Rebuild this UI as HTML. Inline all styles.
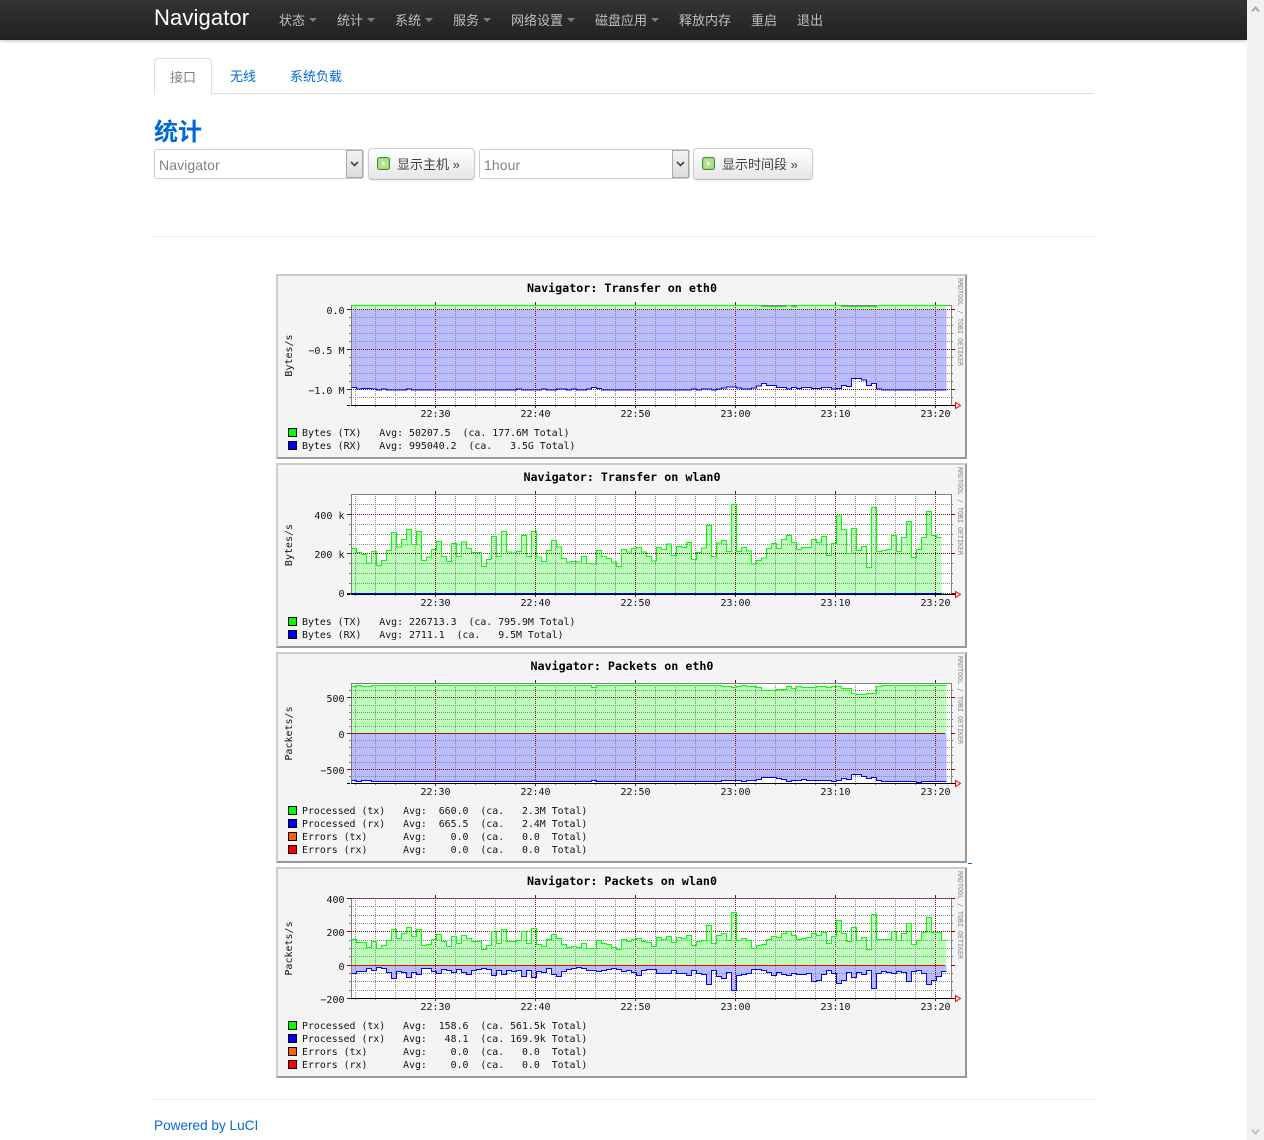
<!DOCTYPE html>
<html lang="zh">
<head>
<meta charset="utf-8">
<title>统计</title>
<style>
html,body{margin:0;padding:0;width:1264px;height:1140px;overflow:hidden;background:#fff}
body{position:relative;font-family:"Liberation Sans","Noto Sans CJK SC",sans-serif;font-size:13px;color:#404040}
a{text-decoration:none;color:#0069d6}
.abs{position:absolute;white-space:nowrap}
#nav{position:absolute;left:0;top:0;width:1247px;height:40px;background:linear-gradient(#333,#222);box-shadow:0 1px 3px rgba(0,0,0,.25)}
#sb{position:absolute;left:1247px;top:0;width:17px;height:1140px;background:#f1f1f1}
.ni{position:absolute;top:0;line-height:41px;color:#bfbfbf;font-size:13px;white-space:nowrap}
.car{position:absolute;top:18px;width:0;height:0;border-left:4px solid transparent;border-right:4px solid transparent;border-top:4px solid #808080}
#brand{position:absolute;left:154px;top:0;line-height:36px;font-size:22px;letter-spacing:.12px;color:#fff}
.sel{position:absolute;top:149px;height:28px;border:1px solid #ccc;border-radius:3px;background:#fff;color:#808080;line-height:30px;font-size:14px;letter-spacing:.1px;padding-left:4px;box-sizing:content-box}
.sel b{position:absolute;right:0;top:0;width:15px;height:26px;background:linear-gradient(#f2f2f2,#dcdcdc);border:1px solid #a9a9a9}
.sel svg{position:absolute;left:3px;top:10px}
.btn{position:absolute;top:148px;height:30px;border:1px solid #ccc;border-bottom-color:#bbb;border-radius:4px;background:linear-gradient(#fff,#e6e6e6);box-shadow:0 1px 2px rgba(0,0,0,.08);line-height:32px;color:#404040;font-size:13px;white-space:nowrap;box-sizing:content-box}
.btn span{position:absolute;top:0}
.btn svg{position:absolute;left:8px;top:8px}
.hr{position:absolute;left:154px;width:940px;height:1px;background:#eee}
svg text{font-family:"DejaVu Sans Mono","Liberation Mono",monospace;font-size:10px;fill:#111;white-space:pre}
svg text.l{font-size:9.9px}
svg text.tt{font-size:11.7px;font-weight:bold;fill:#000;text-anchor:middle}
svg text.yl{text-anchor:end}
svg text.xl{text-anchor:middle}
svg text.rr{font-size:6.65px;fill:#888}
.mn{fill:none;stroke:#8a8a8a;stroke-width:1;stroke-dasharray:1 1;shape-rendering:crispEdges}
.mj{fill:none;stroke:#7a1010;stroke-width:1;stroke-dasharray:1 1;shape-rendering:crispEdges}
.tkn{fill:none;stroke:#7f7f7f;stroke-width:1;stroke-dasharray:2 600 2;shape-rendering:crispEdges}
.tkj{fill:none;stroke:#7a1010;stroke-width:1;stroke-dasharray:4 600 4;shape-rendering:crispEdges}
.sl{fill:none;stroke-width:1;shape-rendering:crispEdges}
.lg{fill:none;stroke-width:1;vector-effect:non-scaling-stroke;shape-rendering:crispEdges}
.fg{fill:#bbffbb;stroke:none;shape-rendering:crispEdges}
.fb{fill:#bbbbff;stroke:none;shape-rendering:crispEdges}
.sq{stroke:#000;stroke-width:1;shape-rendering:crispEdges}
</style>
</head>
<body>
<div id="nav">
  <div id="brand">Navigator</div>
  <div class="ni" style="left:279px">状态</div><div class="car" style="left:309px"></div>
  <div class="ni" style="left:337px">统计</div><div class="car" style="left:367px"></div>
  <div class="ni" style="left:395px">系统</div><div class="car" style="left:425px"></div>
  <div class="ni" style="left:453px">服务</div><div class="car" style="left:483px"></div>
  <div class="ni" style="left:511px">网络设置</div><div class="car" style="left:567px"></div>
  <div class="ni" style="left:595px">磁盘应用</div><div class="car" style="left:651px"></div>
  <div class="ni" style="left:679px">释放内存</div>
  <div class="ni" style="left:751px">重启</div>
  <div class="ni" style="left:797px">退出</div>
</div>
<div id="sb"></div>

<div class="abs" style="left:154px;top:93px;width:940px;height:1px;background:#ddd"></div>
<div class="abs" style="left:154px;top:58px;width:56px;border:1px solid #ddd;border-bottom:1px solid #fff;border-radius:4px 4px 0 0;background:#fff;color:#808080;line-height:37px;text-align:center;box-sizing:content-box;height:35px">接口</div>
<div class="abs" style="left:230px;top:58px;line-height:38px"><a href="#">无线</a></div>
<div class="abs" style="left:290px;top:58px;line-height:38px"><a href="#">系统负载</a></div>

<div class="abs" style="left:154px;top:118px;line-height:30px;font-size:24px;font-weight:bold;color:#0069d6">统计</div>

<div class="sel" style="left:154px;width:204px">Navigator<b><svg width="9" height="6" viewBox="0 0 9 6"><path d="M1 1l3.500 3.500L8 1" fill="none" stroke="#444" stroke-width="1.600"/></svg></b></div>
<div class="btn" style="left:368px;width:105px">
  <svg width="13" height="13" viewBox="0 0 13 13"><rect x=".5" y=".5" width="12" height="12" rx="2" fill="#9fd574" stroke="#3f8f35"/><rect x="2" y="2" width="9" height="9" fill="#b4e08c"/><path d="M5 4l3.500 2.500L5 9z" fill="#fff"/></svg>
  <span style="left:28px">显示主机 »</span>
</div>
<div class="sel" style="left:479px;width:205px">1hour<b><svg width="9" height="6" viewBox="0 0 9 6"><path d="M1 1l3.500 3.500L8 1" fill="none" stroke="#444" stroke-width="1.600"/></svg></b></div>
<div class="btn" style="left:693px;width:118px">
  <svg width="13" height="13" viewBox="0 0 13 13"><rect x=".5" y=".5" width="12" height="12" rx="2" fill="#9fd574" stroke="#3f8f35"/><rect x="2" y="2" width="9" height="9" fill="#b4e08c"/><path d="M5 4l3.500 2.500L5 9z" fill="#fff"/></svg>
  <span style="left:28px">显示时间段 »</span>
</div>

<div class="hr" style="top:236px"></div>
<div class="hr" style="top:1099px"></div>
<div class="abs" style="left:154px;top:1116px;line-height:20px;font-size:13.6px"><a href="#">Powered by LuCI</a></div>
<div class="abs" style="left:968px;top:863px;width:4px;height:1px;background:#0069d6"></div>

<svg class="abs" style="left:0;top:0" width="1264" height="1140" viewBox="0 0 1264 1140">
<defs>
  <path id="vn" d="M355.500 0V100M375.500 0V100M395.500 0V100M415.500 0V100M455.500 0V100M475.500 0V100M495.500 0V100M515.500 0V100M555.500 0V100M575.500 0V100M595.500 0V100M615.500 0V100M655.500 0V100M675.500 0V100M695.500 0V100M715.500 0V100M755.500 0V100M775.500 0V100M795.500 0V100M815.500 0V100M855.500 0V100M875.500 0V100M895.500 0V100M915.500 0V100"/>
  <path id="vj" d="M435.500 0V100M535.500 0V100M635.500 0V100M735.500 0V100M835.500 0V100M935.500 0V100"/>
  <g id="vg">
    <use href="#vn" class="mn"/>
    <use href="#vj" class="mj"/>
    <path class="sl" stroke="#7f7f7f" d="M355.500 100V102M375.500 100V102M395.500 100V102M415.500 100V102M455.500 100V102M475.500 100V102M495.500 100V102M515.500 100V102M555.500 100V102M575.500 100V102M595.500 100V102M615.500 100V102M655.500 100V102M675.500 100V102M695.500 100V102M715.500 100V102M755.500 100V102M775.500 100V102M795.500 100V102M815.500 100V102M855.500 100V102M875.500 100V102M895.500 100V102M915.500 100V102"/>
    <path class="sl" stroke="#7a1010" d="M435.500 -3V0M535.500 -3V0M635.500 -3V0M735.500 -3V0M835.500 -3V0M935.500 -3V0M435.500 100V103M535.500 100V103M635.500 100V103M735.500 100V103M835.500 100V103M935.500 100V103"/>
    <path class="sl" stroke="#7f7f7f" d="M351.500 0V100M951.500 0V100M351 .5H952"/>
    <path class="sl" stroke="#000" stroke-dasharray="3 1" d="M347 100.500H955"/>
    <path class="sl" stroke="#000" d="M351 100.500H955"/>
    <path d="M955.500 97.500L960.500 100.500L955.500 103.500Z" fill="none" stroke="#f00" stroke-width="1"/>
  </g>
  <g id="xl">
    <text class="xl" x="435.500" y="0">22:30</text><text class="xl" x="535.500" y="0">22:40</text><text class="xl" x="635.500" y="0">22:50</text><text class="xl" x="735.500" y="0">23:00</text><text class="xl" x="835.500" y="0">23:10</text><text class="xl" x="935.500" y="0">23:20</text>
  </g>
  <g id="fA"><rect width="691" height="185" fill="#999"/><path d="M0 0H691L689 2H2V183L0 185Z" fill="#ccc"/><rect x="2" y="2" width="687" height="181" fill="#f4f4f4"/></g>
  <g id="fB"><rect width="691" height="211" fill="#999"/><path d="M0 0H691L689 2H2V209L0 211Z" fill="#ccc"/><rect x="2" y="2" width="687" height="207" fill="#f4f4f4"/></g>
</defs>

<!-- scrollbar arrows -->
<path d="M1252 11.500l3.500-4 3.500 4" fill="none" stroke="#a8a8a8" stroke-width="2"/>
<path d="M1252 1129.500l3.500 4 3.500-4" fill="none" stroke="#c0c0c0" stroke-width="2"/>

<!-- CHART 1 -->
<use href="#fA" x="276" y="274"/>
<rect x="351" y="305" width="600" height="100" fill="#fff"/>
<g transform="translate(351.500,272) scale(5,.33333)">
  <rect x="-.1" y="100" width="119" height="12" class="fg"/>
  <path class="fb" d="M-.1 112V347h1.100V351h1V349h2V351h1V354h1V351h1V354h4V351h1V354h21V351h1V354h4V351h1V354h2V351h2V354h1V351h1V354h2V351h1V346h1V349h1V354h18V351h1V354h1V351h2V354h1V351h1V348h1V345h2V348h1V351h2V348h1V342h1V334h1V340h2V346h2V351h1V346h1V349h1V346h2V349h2V346h2V351h1V349h1V340h1V343h1V319h2V324h1V340h1V334h1V351h1V354h13V112Z"/>
</g>
<g transform="translate(0,305)"><use href="#vg"/></g>
<path id="h1n" class="mn" d="M351 317.500H951M351 325.500H951M351 333.500H951M351 341.500H951M351 357.500H951M351 365.500H951M351 373.500H951M351 381.500H951M351 397.500H951"/>
<path class="mj" d="M351 309.500H951M351 349.500H951M351 389.500H951"/>
<path class="tkn" d="M349 317.500H953M349 325.500H953M349 333.500H953M349 341.500H953M349 357.500H953M349 365.500H953M349 373.500H953M349 381.500H953M349 397.500H953"/>
<path class="tkj" d="M347 309.500H955M347 349.500H955M347 389.500H955"/>
<g transform="translate(351.500,272) scale(5,.33333)">
  <path class="lg" stroke="#00ff00" d="M0 100h82V103h5V100h1V103h1V100h9V103h7V100h14"/>
  <path class="lg" stroke="#0000ff" d="M0 347h1V351h1V349h2V351h1V354h1V351h1V354h4V351h1V354h21V351h1V354h4V351h1V354h2V351h2V354h1V351h1V354h2V351h1V346h1V349h1V354h18V351h1V354h1V351h2V354h1V351h1V348h1V345h2V348h1V351h2V348h1V342h1V334h1V340h2V346h2V351h1V346h1V349h1V346h2V349h2V346h2V351h1V349h1V340h1V343h1V319h2V324h1V340h1V334h1V351h1V354h13"/>
</g>
<text class="tt" x="622" y="292">Navigator: Transfer on eth0</text>
<text class="yl" x="344.500" y="314">0.0</text><text class="yl" x="344.500" y="354">−0.5 M</text><text class="yl" x="344.500" y="394">−1.0 M</text>
<text class="xl" text-anchor="middle" transform="translate(292,355.500) rotate(-90)">Bytes/s</text>
<use href="#xl" x="0" y="417"/>
<text class="rr" transform="translate(958,278) rotate(90)">RRDTOOL / TOBI OETIKER</text>
<rect class="sq" x="288.500" y="428.500" width="8" height="8" fill="#00ff00"/><rect class="sq" x="288.500" y="441.500" width="8" height="8" fill="#0000ff"/>
<text class="l" x="302" y="436">Bytes (TX)   Avg: 50207.5  (ca. 177.6M Total)</text>
<text class="l" x="302" y="449">Bytes (RX)   Avg: 995040.2  (ca.   3.5G Total)</text>

<!-- CHART 2 -->
<use href="#fA" x="276" y="463"/>
<rect x="351" y="494" width="600" height="100" fill="#fff"/>
<g transform="translate(351.500,462) scale(5,.33333)">
  <path class="fg" d="M-.1 394V260h1.100V272h1V278h1V303h1V268h1V310h1V295h1V265h1V212h1V255h1V232h1V203h1V247h1V208h1V295h1V285h1V262h1V238h1V283h1V298h1V244h1V283h1V240h1V260h1V271h1V271h1V313h1V292h1V223h1V283h1V208h1V270h1V273h1V268h1V220h1V283h1V208h1V285h1V298h1V265h1V235h1V255h1V290h1V300h1V298h1V300h1V283h1V305h1V306h1V265h1V283h1V290h1V300h1V313h1V262h1V270h1V260h1V257h1V270h1V283h1V297h1V256h1V263h1V246h1V280h1V253h1V256h1V241h1V292h1V272h1V258h1V190h1V283h1V243h1V235h1V268h1V127h1V268h1V257h1V267h1V306h1V296h1V288h1V260h1V244h1V260h1V233h1V220h1V241h1V262h1V256h1V256h1V232h1V242h1V223h1V280h1V244h1V162h1V203h1V274h1V199h1V265h1V253h1V316h1V136h1V268h1V265h1V263h1V220h1V268h1V226h1V179h1V286h1V262h1V226h1V148h1V220h1V226h1V394Z"/>
</g>
<g transform="translate(0,494)"><use href="#vg"/></g>
<path class="mn" d="M351 504.500H951M351 524.500H951M351 534.500H951M351 544.500H951M351 563.500H951M351 573.500H951M351 583.500H951"/>
<path class="mj" d="M351 514.500H951M351 553.500H951M351 593.500H951"/>
<path class="tkn" d="M349 504.500H953M349 524.500H953M349 534.500H953M349 544.500H953M349 563.500H953M349 573.500H953M349 583.500H953"/>
<path class="tkj" d="M347 514.500H955M347 553.500H955M347 593.500H955"/>
<g transform="translate(351.500,462) scale(5,.33333)">
  <path class="lg" stroke="#00ff00" d="M0 260h1V272h1V278h1V303h1V268h1V310h1V295h1V265h1V212h1V255h1V232h1V203h1V247h1V208h1V295h1V285h1V262h1V238h1V283h1V298h1V244h1V283h1V240h1V260h1V271h1V271h1V313h1V292h1V223h1V283h1V208h1V270h1V273h1V268h1V220h1V283h1V208h1V285h1V298h1V265h1V235h1V255h1V290h1V300h1V298h1V300h1V283h1V305h1V306h1V265h1V283h1V290h1V300h1V313h1V262h1V270h1V260h1V257h1V270h1V283h1V297h1V256h1V263h1V246h1V280h1V253h1V256h1V241h1V292h1V272h1V258h1V190h1V283h1V243h1V235h1V268h1V127h1V268h1V257h1V267h1V306h1V296h1V288h1V260h1V244h1V260h1V233h1V220h1V241h1V262h1V256h1V256h1V232h1V242h1V223h1V280h1V244h1V162h1V203h1V274h1V199h1V265h1V253h1V316h1V136h1V268h1V265h1V263h1V220h1V268h1V226h1V179h1V286h1V262h1V226h1V148h1V220h1V226h1"/>
  <path class="lg" stroke="#0000ff" d="M0 394H118"/>
</g>
<text class="tt" x="622" y="481">Navigator: Transfer on wlan0</text>
<text class="yl" x="344.500" y="519">400 k</text><text class="yl" x="344.500" y="558">200 k</text><text class="yl" x="344.500" y="597">0</text>
<text text-anchor="middle" transform="translate(292,545) rotate(-90)">Bytes/s</text>
<use href="#xl" x="0" y="606"/>
<text class="rr" transform="translate(958,467) rotate(90)">RRDTOOL / TOBI OETIKER</text>
<rect class="sq" x="288.500" y="617.500" width="8" height="8" fill="#00ff00"/><rect class="sq" x="288.500" y="630.500" width="8" height="8" fill="#0000ff"/>
<text class="l" x="302" y="625">Bytes (TX)   Avg: 226713.3  (ca. 795.9M Total)</text>
<text class="l" x="302" y="638">Bytes (RX)   Avg: 2711.1  (ca.   9.5M Total)</text>

<!-- CHART 3 -->
<use href="#fB" x="276" y="652"/>
<rect x="351" y="683" width="600" height="100" fill="#fff"/>
<g transform="translate(351.500,650) scale(5,.33333)">
  <path class="fg" d="M-.1 250V109h1.100V106h1V109h2V106h44V112h1V106h25V109h2V112h1V109h1V106h1V109h2V112h1V121h3V118h2V109h1V115h1V109h1V112h3V109h2V112h1V109h2V115h2V130h1V133h2V130h2V109h1V106h13V250Z"/>
  <path class="fb" d="M-.1 250V392h1.100V394h1V391h2V394h44V391h1V394h25V391h4V394h1V391h2V388h1V382h3V385h1V388h1V394h1V391h2V388h1V391h5V394h1V391h1V385h1V388h1V373h2V379h1V385h1V382h1V391h1V394h7V397h1V394h5V250Z"/>
</g>
<g transform="translate(0,683)"><use href="#vg"/></g>
<path class="mn" d="M351 690.500H951M351 705.500H951M351 712.500H951M351 719.500H951M351 726.500H951M351 740.500H951M351 747.500H951M351 755.500H951M351 762.500H951M351 776.500H951"/>
<path class="mj" d="M351 697.500H951M351 769.500H951"/>
<path class="tkn" d="M349 690.500H953M349 705.500H953M349 712.500H953M349 719.500H953M349 726.500H953M349 740.500H953M349 747.500H953M349 755.500H953M349 762.500H953M349 776.500H953"/>
<path class="tkj" d="M347 697.500H955M347 769.500H955"/>
<path class="sl" stroke="#a01010" d="M347 733.500H945"/>
<path class="tkj" d="M347 733.500H955"/>
<g transform="translate(351.500,650) scale(5,.33333)">
  <path class="lg" stroke="#00ff00" d="M0 109h1V106h1V109h2V106h44V112h1V106h25V109h2V112h1V109h1V106h1V109h2V112h1V121h3V118h2V109h1V115h1V109h1V112h3V109h2V112h1V109h2V115h2V130h1V133h2V130h2V109h1V106h13"/>
  <path class="lg" stroke="#0000ff" d="M0 392h1V394h1V391h2V394h44V391h1V394h25V391h4V394h1V391h2V388h1V382h3V385h1V388h1V394h1V391h2V388h1V391h5V394h1V391h1V385h1V388h1V373h2V379h1V385h1V382h1V391h1V394h7V397h1V394h5"/>
</g>
<text class="tt" x="622" y="670">Navigator: Packets on eth0</text>
<text class="yl" x="344.500" y="702">500</text><text class="yl" x="344.500" y="738">0</text><text class="yl" x="344.500" y="774">−500</text>
<text text-anchor="middle" transform="translate(292,733.500) rotate(-90)">Packets/s</text>
<use href="#xl" x="0" y="795"/>
<text class="rr" transform="translate(958,656) rotate(90)">RRDTOOL / TOBI OETIKER</text>
<rect class="sq" x="288.500" y="806.500" width="8" height="8" fill="#00ff00"/><rect class="sq" x="288.500" y="819.500" width="8" height="8" fill="#0000ff"/><rect class="sq" x="288.500" y="832.500" width="8" height="8" fill="#ff6000"/><rect class="sq" x="288.500" y="845.500" width="8" height="8" fill="#ff0000"/>
<text class="l" x="302" y="814">Processed (tx)   Avg:  660.0  (ca.   2.3M Total)</text>
<text class="l" x="302" y="827">Processed (rx)   Avg:  665.5  (ca.   2.4M Total)</text>
<text class="l" x="302" y="840">Errors (tx)      Avg:    0.0  (ca.   0.0  Total)</text>
<text class="l" x="302" y="853">Errors (rx)      Avg:    0.0  (ca.   0.0  Total)</text>

<!-- CHART 4 -->
<use href="#fB" x="276" y="867"/>
<rect x="351" y="898" width="600" height="100" fill="#fff"/>
<g transform="translate(351.500,865) scale(5,.33333)">
  <path class="fg" d="M-.1 300V223h1.100V232h1V232h1V248h1V229h1V250h1V241h1V226h1V193h1V220h1V205h1V187h1V214h1V193h1V241h1V238h1V223h1V208h1V229h1V244h1V214h1V235h1V211h1V220h1V229h1V229h1V253h1V241h1V199h1V235h1V193h1V229h1V229h1V226h1V199h1V235h1V190h1V238h1V244h1V223h1V208h1V220h1V238h1V247h1V244h1V247h1V235h1V250h1V250h1V226h1V235h1V238h1V247h1V253h1V223h1V229h1V223h1V220h1V229h1V232h1V244h1V217h1V223h1V214h1V232h1V217h1V220h1V211h1V241h1V229h1V226h1V181h1V235h1V211h1V205h1V226h1V142h1V226h1V220h1V226h1V250h1V241h1V238h1V223h1V214h1V217h1V205h1V199h1V211h1V223h1V220h1V217h1V205h1V211h1V202h1V235h1V214h1V166h1V205h1V229h1V187h1V226h1V217h1V253h1V148h1V223h1V223h1V223h1V199h1V226h1V205h1V175h1V238h1V226h1V202h1V157h1V202h1V202h1V226h1V300Z"/>
  <path class="fb" d="M-.1 300V326h1.100V319h1V319h1V310h1V317h1V307h1V310h1V322h1V340h1V319h1V322h1V337h1V322h1V328h1V310h1V310h1V319h1V325h1V313h1V316h1V322h1V313h1V322h1V328h1V316h1V313h1V310h1V313h1V331h1V316h1V328h1V316h1V319h1V316h1V334h1V316h1V337h1V319h1V322h1V310h1V328h1V334h1V319h1V313h1V310h1V307h1V310h1V316h1V316h1V319h1V316h1V313h1V310h1V313h1V319h1V316h1V322h1V331h1V316h1V313h1V313h1V325h1V325h1V325h1V316h1V325h1V325h1V331h1V316h1V325h1V328h1V358h1V316h1V334h1V340h1V322h1V376h1V331h1V328h1V325h1V313h1V313h1V316h1V322h1V331h1V322h1V328h1V331h1V325h1V328h1V328h1V325h1V349h1V346h1V328h1V316h1V325h1V355h1V346h1V322h1V337h1V322h1V328h1V316h1V370h1V325h1V319h1V322h1V325h1V319h1V322h1V349h1V319h1V316h1V325h1V358h1V346h1V334h1V319h1V300Z"/>
</g>
<g transform="translate(0,898)"><use href="#vg"/></g>
<path class="mn" d="M351 906.500H951M351 915.500H951M351 923.500H951M351 940.500H951M351 948.500H951M351 956.500H951M351 973.500H951M351 981.500H951M351 990.500H951"/>
<path class="mj" d="M351 898.500H951M351 931.500H951"/>
<path class="tkn" d="M349 906.500H953M349 915.500H953M349 923.500H953M349 940.500H953M349 948.500H953M349 956.500H953M349 973.500H953M349 981.500H953M349 990.500H953"/>
<path class="tkj" d="M347 898.500H955M347 931.500H955M347 965.500H955M347 998.500H955"/>
<g transform="translate(351.500,865) scale(5,.33333)">
  <path class="lg" stroke="#00ff00" d="M0 223h1V232h1V232h1V248h1V229h1V250h1V241h1V226h1V193h1V220h1V205h1V187h1V214h1V193h1V241h1V238h1V223h1V208h1V229h1V244h1V214h1V235h1V211h1V220h1V229h1V229h1V253h1V241h1V199h1V235h1V193h1V229h1V229h1V226h1V199h1V235h1V190h1V238h1V244h1V223h1V208h1V220h1V238h1V247h1V244h1V247h1V235h1V250h1V250h1V226h1V235h1V238h1V247h1V253h1V223h1V229h1V223h1V220h1V229h1V232h1V244h1V217h1V223h1V214h1V232h1V217h1V220h1V211h1V241h1V229h1V226h1V181h1V235h1V211h1V205h1V226h1V142h1V226h1V220h1V226h1V250h1V241h1V238h1V223h1V214h1V217h1V205h1V199h1V211h1V223h1V220h1V217h1V205h1V211h1V202h1V235h1V214h1V166h1V205h1V229h1V187h1V226h1V217h1V253h1V148h1V223h1V223h1V223h1V199h1V226h1V205h1V175h1V238h1V226h1V202h1V157h1V202h1V202h1V226h1"/>
  <path class="lg" stroke="#0000ff" d="M0 326h1V319h1V319h1V310h1V317h1V307h1V310h1V322h1V340h1V319h1V322h1V337h1V322h1V328h1V310h1V310h1V319h1V325h1V313h1V316h1V322h1V313h1V322h1V328h1V316h1V313h1V310h1V313h1V331h1V316h1V328h1V316h1V319h1V316h1V334h1V316h1V337h1V319h1V322h1V310h1V328h1V334h1V319h1V313h1V310h1V307h1V310h1V316h1V316h1V319h1V316h1V313h1V310h1V313h1V319h1V316h1V322h1V331h1V316h1V313h1V313h1V325h1V325h1V325h1V316h1V325h1V325h1V331h1V316h1V325h1V328h1V358h1V316h1V334h1V340h1V322h1V376h1V331h1V328h1V325h1V313h1V313h1V316h1V322h1V331h1V322h1V328h1V331h1V325h1V328h1V328h1V325h1V349h1V346h1V328h1V316h1V325h1V355h1V346h1V322h1V337h1V322h1V328h1V316h1V370h1V325h1V319h1V322h1V325h1V319h1V322h1V349h1V319h1V316h1V325h1V358h1V346h1V334h1V319h1"/>
</g>
<path class="sl" stroke="#ff0000" d="M351 965.500H945"/>
<text class="tt" x="622" y="885">Navigator: Packets on wlan0</text>
<text class="yl" x="344.500" y="903">400</text><text class="yl" x="344.500" y="936">200</text><text class="yl" x="344.500" y="970">0</text><text class="yl" x="344.500" y="1003">−200</text>
<text text-anchor="middle" transform="translate(292,948.500) rotate(-90)">Packets/s</text>
<use href="#xl" x="0" y="1010"/>
<text class="rr" transform="translate(958,871) rotate(90)">RRDTOOL / TOBI OETIKER</text>
<rect class="sq" x="288.500" y="1021.500" width="8" height="8" fill="#00ff00"/><rect class="sq" x="288.500" y="1034.500" width="8" height="8" fill="#0000ff"/><rect class="sq" x="288.500" y="1047.500" width="8" height="8" fill="#ff6000"/><rect class="sq" x="288.500" y="1060.500" width="8" height="8" fill="#ff0000"/>
<text class="l" x="302" y="1029">Processed (tx)   Avg:  158.6  (ca. 561.5k Total)</text>
<text class="l" x="302" y="1042">Processed (rx)   Avg:   48.1  (ca. 169.9k Total)</text>
<text class="l" x="302" y="1055">Errors (tx)      Avg:    0.0  (ca.   0.0  Total)</text>
<text class="l" x="302" y="1068">Errors (rx)      Avg:    0.0  (ca.   0.0  Total)</text>
</svg>
</body>
</html>
